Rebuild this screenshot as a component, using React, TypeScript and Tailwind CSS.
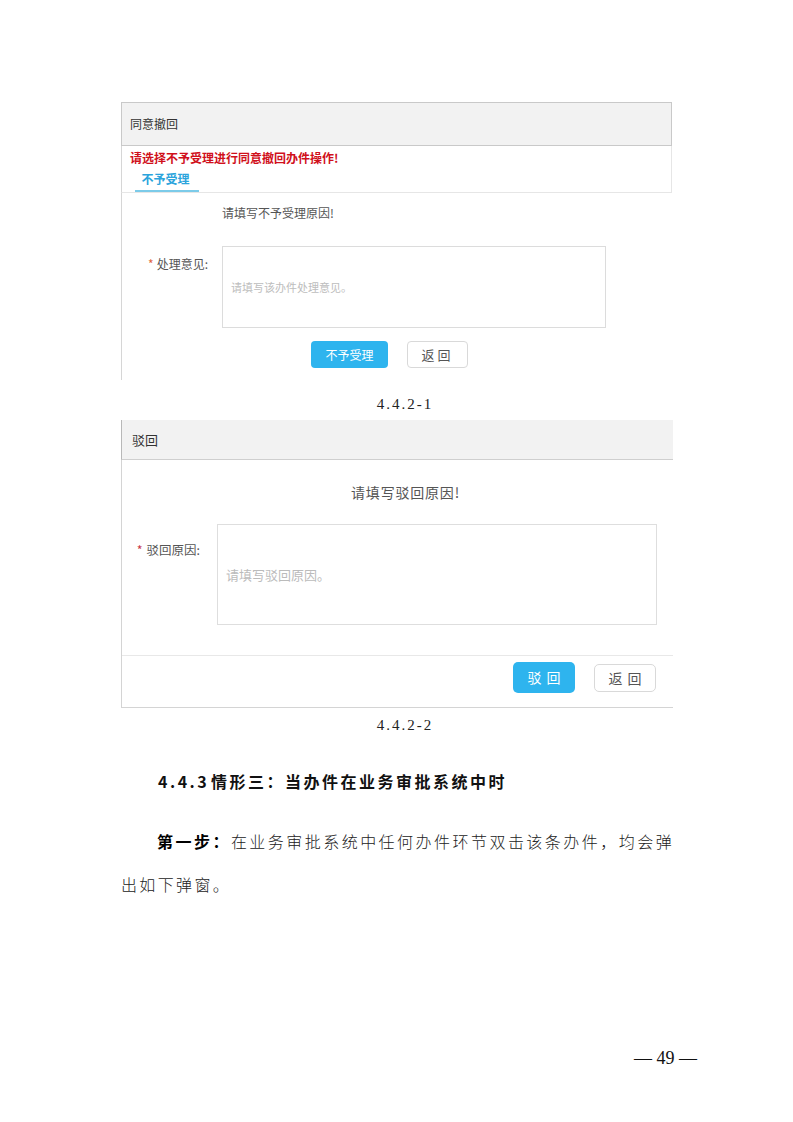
import React from "react";

const ui = { fontFamily: '"Noto Sans CJK SC", "Noto Sans", sans-serif' };
const doc = { fontFamily: '"Liberation Serif", "Noto Sans CJK SC", serif' };

export default function App() {
  return (
    <div className="w-[793px] h-[1122px] bg-white overflow-hidden" style={ui}>
      <div className="pt-[102px] pl-[121px] w-[676px]">
        {/* Box 1 */}
        <div className="w-[551px]">
          <div className="h-[44px] bg-[#f2f2f2] border border-[#c9c9c9] flex items-center pl-[8px] text-[12px] text-[#333]">
            同意撤回
          </div>
          <div className="border-l border-r border-b border-[#e6e6e6] border-l-[#d6d6d6]">
            <div className="h-[24px] flex items-center pl-[8px] text-[12px] font-bold text-[#d0101b]">
              请选择不予受理进行同意撤回办件操作!
            </div>
            <div className="h-[22px] pl-[13px] flex">
              <div className="w-[64px] flex items-start justify-center border-b-2 border-[#7ccbe9] text-[12px] font-bold text-[#2ba4dc] pr-[3px]">
                不予受理
              </div>
            </div>
          </div>
          <div className="border-l border-[#d6d6d6] pt-[10px] pb-[12px]">
            <div className="h-[20px] flex items-center pl-[100px] text-[12px] text-[#555]">
              请填写不予受理原因!
            </div>
            <div className="mt-[23px] flex">
              <div className="w-[86px] pt-[8px] pr-[14px] flex justify-end text-[12px] text-[#555] h-[20px] items-center box-content">
                <span className="text-[#e0643c] mr-[3px]">*</span>处理意见:
              </div>
              <div className="w-[384px] h-[82px] border border-[#dcdcdc] flex items-center pl-[8px] text-[11px] text-[#bdbdbd]">
                请填写该办件处理意见。
              </div>
            </div>
            <div className="mt-[13px] flex pl-[189px] gap-[19px]">
              <div className="w-[77px] h-[27px] rounded-[4px] bg-[#2eb4ee] text-white text-[12px] flex items-center justify-center">
                不予受理
              </div>
              <div className="w-[61px] h-[27px] rounded-[4px] border border-[#d9d9d9] bg-white text-[#555] text-[13px] flex items-center justify-center tracking-[3px]">
                返回
              </div>
            </div>
          </div>
        </div>

        <div className="mt-[14px] w-[568px] h-[20px] flex items-center justify-center text-[15px] tracking-[2px] text-[#222]" style={doc}>
          4.4.2-1
        </div>

        {/* Box 2 */}
        <div className="mt-[6px] w-[552px] border-l border-b border-[#d4d4d4]">
          <div className="h-[40px] bg-[#f2f2f2] border-b border-[#cfcfcf] flex items-center pl-[10px] text-[13px] text-[#333] border-l border-l-[#b8b8b8] -ml-px">
            驳回
          </div>
          <div className="mt-[22px] h-[20px] flex items-center justify-center pl-[16px] text-[14px] tracking-[0.8px] text-[#555]">
            请填写驳回原因!
          </div>
          <div className="mt-[22px] flex">
            <div className="w-[78px] pt-[17px] pr-[17px] box-content flex justify-end items-start text-[12.5px] text-[#555]">
              <span className="text-[#c8384a] mr-[4px]">*</span>驳回原因:
            </div>
            <div className="w-[440px] h-[101px] border border-[#dedede] flex items-center pl-[8px] text-[13px] text-[#bbbbbb]">
              请填写驳回原因。
            </div>
          </div>
          <div className="mt-[30px] border-t border-[#e8e8e8] pt-[6px] pb-[14px] flex justify-end pr-[17px] gap-[19px]">
            <div className="w-[62px] h-[31px] rounded-[5px] bg-[#2eb4ee] text-white text-[14px] flex items-center justify-center tracking-[5px] pl-[5px]">
              驳回
            </div>
            <div className="mt-[2px] w-[62px] h-[28px] rounded-[5px] border border-[#d9d9d9] bg-white text-[#555] text-[14px] flex items-center justify-center tracking-[5px] pl-[5px]">
              返回
            </div>
          </div>
        </div>

        <div className="mt-[7px] w-[568px] h-[20px] flex items-center justify-center text-[15px] tracking-[2px] text-[#222]" style={doc}>
          4.4.2-2
        </div>

        <div className="mt-[34px] h-[24px] flex items-center pl-[37px] text-[#111] font-bold" style={ui}>
          <span className="w-[53px] text-[16px] tracking-[2.5px]">4.4.3</span>
          <span className="text-[16px] tracking-[2.5px]">情形三：当办件在业务审批系统中时</span>
        </div>

        <p className="mt-[27px] w-[553px] text-[16px] leading-[43px] tracking-[2.35px] text-justify indent-[36px] text-[#222] font-light" style={ui}>
          <span className="font-bold text-black">第一步：</span>在业务审批系统中任何办件环节双击该条办件，均会弹出如下弹窗。
        </p>
      </div>

      <div className="mt-[139px] flex justify-end pr-[96px] text-[18px] text-[#111]" style={doc}>
        — 49 —
      </div>
    </div>
  );
}
